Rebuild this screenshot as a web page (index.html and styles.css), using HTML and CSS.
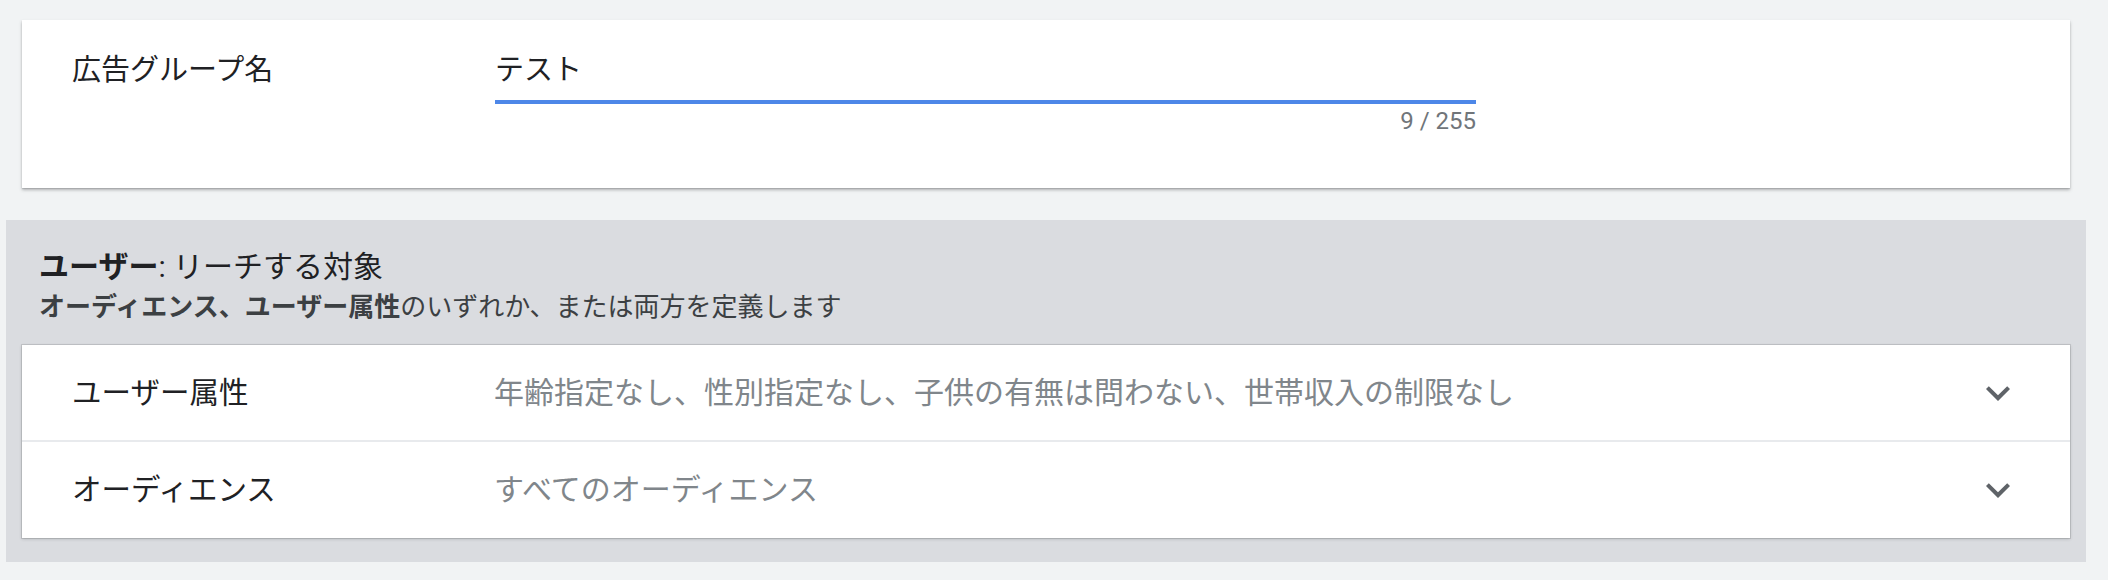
FILE: index.html
```html
<!DOCTYPE html>
<html lang="ja">
<head>
<meta charset="utf-8">
<title>広告グループ</title>
<link rel="stylesheet" href="styles.css">
</head>
<body>
<div class="page">
  <section class="card name-card">
    <div class="field-label">広告グループ名</div>
    <div class="field">
      <div class="input">テスト</div>
      <div class="counter">9 / 255</div>
    </div>
  </section>

  <section class="panel">
    <div class="panel-head">
      <div class="panel-title"><b>ユーザー</b>: リーチする対象</div>
      <div class="panel-sub"><b>オーディエンス、ユーザー属性</b>のいずれか、または両方を定義します</div>
    </div>
    <div class="list">
      <div class="row">
        <div class="row-label">ユーザー属性</div>
        <div class="row-value">年齢指定なし、性別指定なし、子供の有無は問わない、世帯収入の制限なし</div>
        <svg class="chev" viewBox="0 0 24 24" width="48" height="48"><path d="M16.59 8.59L12 13.17 7.41 8.59 6 10l6 6 6-6z"/></svg>
      </div>
      <div class="row">
        <div class="row-label">オーディエンス</div>
        <div class="row-value">すべてのオーディエンス</div>
        <svg class="chev" viewBox="0 0 24 24" width="48" height="48"><path d="M16.59 8.59L12 13.17 7.41 8.59 6 10l6 6 6-6z"/></svg>
      </div>
    </div>
  </section>
</div>
</body>
</html>
```

FILE: styles.css
```css
html, body {
  margin: 0;
  padding: 0;
  background: #f1f3f4;
}
body {
  font-family: Roboto, "Noto Sans CJK JP", sans-serif;
  color: #202124;
}
.page {
  width: 2048px;
  padding: 20px 0 0 22px;
}
.card {
  background: #fff;
  box-shadow: 0 2px 3px rgba(60, 64, 67, 0.35), 0 1px 1px rgba(60, 64, 67, 0.15);
}
.name-card {
  display: flex;
  align-items: flex-start;
  padding: 30px 0 52px 50px;
}
.field-label {
  width: 423px;
  font-size: 29px;
  line-height: 40px;
  color: #202124;
}
.field {
  width: 981px;
}
.input {
  font-size: 29px;
  line-height: 40px;
  padding-bottom: 10px;
  border-bottom: 4px solid #4d87e8;
  color: #202124;
}
.counter {
  text-align: right;
  font-size: 24px;
  line-height: 30px;
  margin-top: 2px;
  color: #70757a;
}
.panel {
  margin: 32px -16px 0 -16px;
  background: #dadce0;
  padding: 27px 16px 24px 16px;
}
.panel-head {
  padding-left: 17px;
  margin-bottom: 20px;
}
.panel-title {
  font-size: 30px;
  line-height: 40px;
  color: #202124;
}
.panel-title b, .panel-sub b {
  font-weight: 700;
}
.panel-sub {
  font-size: 26px;
  line-height: 36px;
  margin-top: 2px;
  color: #3c4043;
}
.list {
  background: #fff;
  box-shadow: 0 0 0 1px rgba(0, 0, 0, 0.1), 0 1px 3px rgba(60, 64, 67, 0.25);
}
.row {
  display: flex;
  align-items: center;
  height: 95px;
  padding-left: 50px;
}
.row + .row {
  border-top: 2px solid #e8eaed;
  height: 96px;
}
.row-label {
  width: 422px;
  font-size: 29.5px;
  line-height: 40px;
  color: #202124;
}
.row-value {
  flex: 1;
  font-size: 30px;
  line-height: 40px;
  color: #80868b;
}
.chev {
  fill: #5f6368;
  margin-right: 48px;
  flex: none;
}
```
